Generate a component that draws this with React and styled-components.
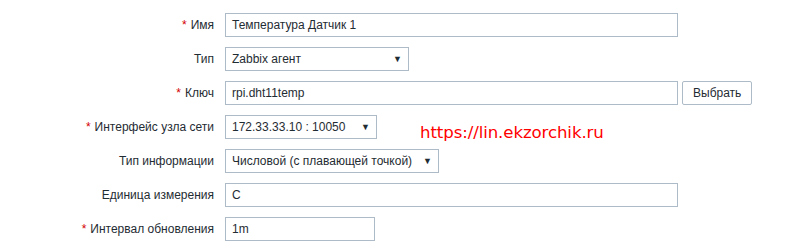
import React from 'react'
import styled, { createGlobalStyle } from 'styled-components'

const GlobalStyle = createGlobalStyle`
    html, body {
        margin: 0;
        padding: 0;
        background: #fff;
    }
    body {
        font-family: Arial, "Liberation Sans", sans-serif;
        font-size: 12px;
        color: #1f2c33;
    }
`;

const Form = styled.div`
    display: grid;
    grid-template-columns: 214px auto;
    column-gap: 11px;
    row-gap: 10px;
    padding-top: 13px;
    align-items: center;
    position: relative;
`;

const Label = styled.label`
    text-align: right;
    line-height: 24px;
    white-space: nowrap;
`;

const Star = styled.span`
    color: #d40000;
    margin-right: 4px;
`;

const FieldRow = styled.div`
    display: flex;
    align-items: center;
    gap: 4px;
`;

const Input = styled.div`
    box-sizing: border-box;
    width: ${p => p.width}px;
    height: 24px;
    border: 1px solid #acbbc7;
    background: #fff;
    padding: 0 6px;
    line-height: 22px;
    white-space: nowrap;
`;

const Select = styled(Input)`
    display: flex;
    justify-content: space-between;
    align-items: center;
    padding-right: 6px;
`;

const Arrow = styled.span`
    font-size: 9px;
    color: #1f2c33;
`;

const Button = styled.button`
    box-sizing: border-box;
    height: 24px;
    width: 70px;
    border: 1px solid #acbbc7;
    border-radius: 2px;
    background: #fff;
    color: #1f2c33;
    font-family: Arial, "Liberation Sans", sans-serif;
    font-size: 12px;
    padding: 0 10px;
`;

const Watermark = styled.div`
    position: absolute;
    left: 420px;
    top: 123px;
    color: #ff0000;
    font-family: "DejaVu Sans", Verdana, sans-serif;
    font-size: 16.6px;
    letter-spacing: -0.1px;
`;

const Field = ({ label, required, children }) => (
    <>
        <Label>{required && <Star>*</Star>}{label}</Label>
        <FieldRow>{children}</FieldRow>
    </>
)

const SelectBox = ({ width, children }) => (
    <Select width={width}>
        <span>{children}</span>
        <Arrow>▼</Arrow>
    </Select>
)

export default function App() {
    return (
        <>
            <GlobalStyle />
            <Form>
                <Field label="Имя" required>
                    <Input width={453}>Температура Датчик 1</Input>
                </Field>
                <Field label="Тип">
                    <SelectBox width={184}>Zabbix агент</SelectBox>
                </Field>
                <Field label="Ключ" required>
                    <Input width={453}>rpi.dht11temp</Input>
                    <Button>Выбрать</Button>
                </Field>
                <Field label="Интерфейс узла сети" required>
                    <SelectBox width={152}>172.33.33.10 : 10050</SelectBox>
                </Field>
                <Field label="Тип информации">
                    <SelectBox width={214}>Числовой (с плавающей точкой)</SelectBox>
                </Field>
                <Field label="Единица измерения">
                    <Input width={453}>C</Input>
                </Field>
                <Field label="Интервал обновления" required>
                    <Input width={150}>1m</Input>
                </Field>
                <Watermark>https://lin.ekzorchik.ru</Watermark>
            </Form>
        </>
    )
}
